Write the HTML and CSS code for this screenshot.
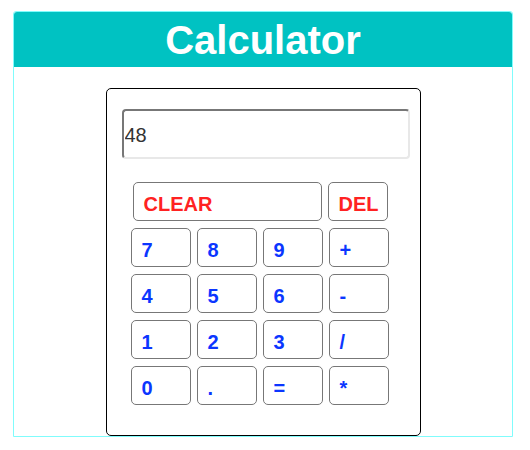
FILE: index.html
```html
<!DOCTYPE html>
<html>
<head>
<meta charset="utf-8">
<link rel="stylesheet" href="styles.css">
</head>
<body>
<div class="app">
  <h1 class="title">Calculator</h1>
  <div class="calc">
    <input class="display" type="text" value="48">
    <div class="top-row">
      <button class="key key-red key-clear">CLEAR</button>
      <button class="key key-red">DEL</button>
    </div>
    <div class="keys">
      <button class="key">7</button>
      <button class="key">8</button>
      <button class="key">9</button>
      <button class="key">+</button>
      <button class="key">4</button>
      <button class="key">5</button>
      <button class="key">6</button>
      <button class="key">-</button>
      <button class="key">1</button>
      <button class="key">2</button>
      <button class="key">3</button>
      <button class="key">/</button>
      <button class="key">0</button>
      <button class="key">.</button>
      <button class="key">=</button>
      <button class="key">*</button>
    </div>
  </div>
</div>
</body>
</html>
```
FILE: styles.css
```css
* { box-sizing: border-box; }
html, body { margin: 0; padding: 0; background: #fff; }
body { font-family: "Liberation Sans", Arial, Helvetica, sans-serif; }

.app {
  margin: 11px 0 0 13px;
  width: 500px;
  border: 1px solid #80fcfc;
  border-radius: 3px 3px 0 0;
}

.title {
  margin: 0;
  height: 55px;
  padding-top: 2px;
  line-height: 53px;
  background: #00c2c2;
  color: #fff;
  font-size: 40px;
  font-weight: bold;
  text-align: center;
  border-radius: 3px 3px 0 0;
}

.calc {
  width: 315px;
  margin: 21px auto 0;
  border: 1px solid #000;
  border-radius: 5px;
  padding: 20px 10px 30px 15px;
}

.display {
  display: block;
  width: 288px;
  height: 50px;
  margin: 0;
  padding: 2px 1px 0 1px;
  border-style: solid;
  border-width: 2px;
  border-color: #777 #e8e8e8 #e8e8e8 #777;
  border-radius: 4px;
  font-family: "Liberation Sans", Arial, sans-serif;
  font-size: 20px;
  color: #333;
  outline: none;
  background: #fff;
}

.top-row {
  display: flex;
  gap: 6px;
  margin: 23px 0 7px 11px;
}

.keys {
  display: grid;
  grid-template-columns: repeat(4, 60px);
  grid-auto-rows: 39px;
  column-gap: 6px;
  row-gap: 7px;
  margin-left: 9px;
}

.key {
  width: 60px;
  height: 39px;
  margin: 0;
  padding: 5px 0 0 10px;
  text-align: left;
  background: #fff;
  border: 1px solid #777;
  border-radius: 5px;
  font-family: "Liberation Sans", Arial, sans-serif;
  font-size: 20px;
  font-weight: bold;
  line-height: normal;
  color: #0b36ff;
}

.key-red { color: #ff2222; }
.key-clear { width: 189px; }
```
